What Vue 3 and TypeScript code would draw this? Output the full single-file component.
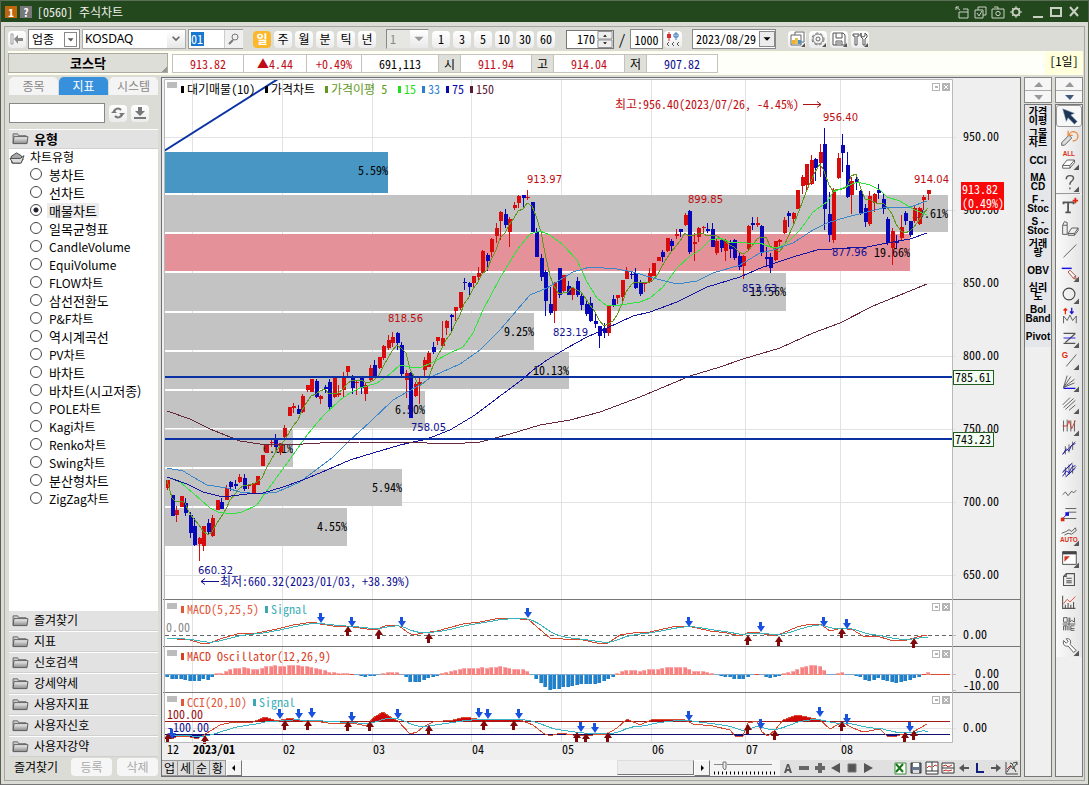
<script setup lang="ts">
import { ref } from 'vue'

type Point = [number, number]

/* ---------- toolbar ---------- */
const periods = ['일', '주', '월', '분', '틱', '년']
const minutes = ['1', '3', '5', '10', '30', '60']
const code = ref('01')
const count = ref('170')
const total = ref('1000')
const keyword = ref('')

const quotes = [
  { text: '913.82', tone: 'up', size: 'w72' },
  { text: '▲4.44', tone: 'up', size: 'w64' },
  { text: '+0.49%', tone: 'up', size: 'w56' },
  { text: '691,113', tone: '', size: 'w78' },
  { text: '시', tone: 'cap', size: 'w22' },
  { text: '911.94', tone: 'up', size: 'w72' },
  { text: '고', tone: 'cap', size: 'w22' },
  { text: '914.04', tone: 'up', size: 'w72' },
  { text: '저', tone: 'cap', size: 'w22' },
  { text: '907.82', tone: 'down', size: 'w72' },
]

/* ---------- sidebar ---------- */
const chartTypes = [
  '봉차트', '선차트', '매물차트', '일목균형표', 'CandleVolume', 'EquiVolume', 'FLOW차트',
  '삼선전환도', 'P&F차트', '역시계곡선', 'PV차트', '바차트', '바차트(시고저종)', 'POLE차트',
  'Kagi차트', 'Renko차트', 'Swing차트', '분산형차트', 'ZigZag차트',
]
const isLatin = (name: string) => /[A-Za-z]/.test(name)
const chosen = ref('매물차트')
const groups = ['즐겨찾기', '지표', '신호검색', '강세약세', '사용자지표', '사용자신호', '사용자강약']

/* ---------- price chart ---------- */
const barX = (i: number) => Math.round(167 + i * 4.5)

// Each row: direction, high, body top, body bottom, low, in thirds of a unit below the base.
const blocks: { base: number; rows: string }[] = [
  {
    base: 360,
    rows: `R360,360,384,390 B405,405,467,467 R438,450,465,486 R408,408,440,440 B415,430,460,468
    B455,465,518,535 B475,498,555,557 R530,533,551,602 R498,498,558,572 B478,489,517,522
    R466,474,528,530 R420,420,449,449 B415,426,448,448 R375,384,421,421 B362,366,381,393
    B360,373,378,388 R343,350,366,368 B343,354,386,392 R372,374,379,388 R370,370,399,402
    R348,348,375,375 R285,285,318,318 R252,255,280,280 R240,245,250,262 B222,235,260,262
    R248,250,275,286 R195,203,231,236 R140,142,168,168 R128,138,143,158 B134,148,162,162
    R102,107,156,158 R75,75,90,95 R57,57,95,95 B57,63,110,115 R104,108,116,131
    B75,80,86,100 B57,66,141,150 R52,55,112,115 R75,98,104,110 R35,50,90,110
    R18,18,36,48 B45,55,84,102 R62,65,70,105 B55,55,85,102 R70,75,102,122
    R15,24,60,65 B0,15,50,55 R-10,-8,24,28 R-45,-42,-6,0 R-75,-60,-36,-30
    R-85,-70,-52,-40 B-84,-80,-50,-30 B-55,-45,42,48 R30,38,60,115 B36,38,173,175
    R66,72,107,110 R55,66,72,132`,
  },
  {
    base: 160,
    rows: `R590,600,630,648 R574,580,622,622 B546,560,577,582 R530,532,543,555 R484,534,558,562
    R480,484,504,526 B462,464,470,512 R440,442,454,482 R396,396,444,450 B355,367,370,390
    B366,370,382,404 R348,348,370,382 R320,339,352,365 R270,272,338,338 B280,284,303,332
    R235,238,276,292 R190,204,228,248 R152,156,184,240 B146,162,195,205 R172,176,216,260
    R125,134,144,150 R106,108,130,144 B104,105,113,140 R90,110,113,120 B125,125,216,216
    B203,217,290,290 B282,294,350,362 B330,336,423,467 B382,432,460,465 R366,370,453,488
    B324,324,404,414 R345,345,393,395 B362,378,404,405 R380,384,405,420 B350,363,404,410
    B400,407,435,450 B420,432,462,468 B412,430,482,486 B462,484,491,503 B498,498,527,563
    B490,504,519,533 R438,438,520,528 B405,416,437,442 R405,405,415,432 R360,360,410,430
    R322,332,356,356 B335,341,346,358 B325,338,384,388 B360,369,401,407 R365,366,373,396
    R325,340,366,368 R308,310,347,348 R290,291,302,304 B270,276,291,305 R234,234,274,276
    B238,242,257,272 R208,222,229,236 B206,206,215,232 R158,164,195,198 B150,153,276,282
    R220,246,251,304`,
  },
  {
    base: 80,
    rows: `R440,445,470,485 R438,441,444,460 B430,448,453,460 B430,447,500,502 R475,483,520,525
    B480,480,503,516 R476,480,514,542 B480,490,508,534 B478,480,535,540 B517,528,560,570
    R525,529,558,596 R436,438,506,510 B412,430,436,450 R412,430,434,442 B435,437,520,528
    B500,530,536,560 B520,530,565,578 R482,484,540,543 R478,480,485,502 R410,420,458,462
    B393,398,409,440 R395,398,416,432 R330,330,386,388 R286,290,318,342 R252,253,314,330
    R226,240,312,314 B233,238,263,302 R192,216,250,290 B145,192,388,450 B335,402,464,486
    R325,329,480,488 R220,235,293,298 B162,195,218,275 B216,256,350,355 R290,303,345,402
    B285,298,310,330 B330,334,402,405 B372,384,425,440 R334,348,432,438 R340,342,370,395
    B312,330,340,356 B340,356,386,402 B410,418,489,495 R445,452,504,555 B465,483,490,505
    R405,440,475,480 B393,398,422,435 B422,423,466,470 R378,384,422,430 R382,384,432,434
    R345,350,360,390 R330,331,342,360`,
  },
]

const candles = blocks
  .flatMap(({ base, rows }) =>
    rows.trim().split(/\s+/).map((row) => {
      const [high, top, bottom, low] = row.slice(1).split(',').map((v) => base + Math.round(Number(v) / 3))
      return { up: row[0] === 'R', high, top, bottom, low }
    }),
  )
  .map((c, i) => ({ ...c, x: barX(i) }))

const toLine = (points: Point[]) => points.map((p) => p.join(',')).join(' ')

const closes = candles.map((c) => (c.up ? c.top : c.bottom))
const fiveDay: Point[] = closes.map((_, i) => {
  const span = closes.slice(Math.max(0, i - 4), i + 1)
  return [barX(i), Math.round(span.reduce((a, b) => a + b, 0) / span.length)]
})

const averages = [
  { color: '#5f981c', points: toLine(fiveDay) },
  {
    color: '#2fe43a',
    points: `167,477 180,482 193,493 210,508 218,512 232,514 242,512 257,505 263,496 277,477 293,455 307,435
    323,416 340,400 350,393 360,388 377,383 390,374 400,365 410,367 420,368 433,362 450,353 463,347 473,333
    483,310 500,278 517,250 530,234 540,231 550,235 563,245 577,260 587,282 597,298 607,306 620,305 640,302
    650,298 663,287 677,268 690,256 700,250 710,240 720,238 730,242 747,243 760,243 770,247 777,248 787,243
    800,230 813,212 827,202 833,192 843,188 857,182 870,185 880,190 887,197 900,201 913,209 927,215`,
  },
  {
    color: '#3a86c8',
    points: `167,468 183,471 193,477 207,485 227,488 240,492 260,494 277,492 300,482 320,467 333,457 350,440
    370,422 393,400 407,392 420,385 433,376 460,364 480,350 500,330 517,310 530,295 547,288 560,280 573,272
    590,267 617,269 633,272 653,278 677,284 697,281 713,273 740,265 760,253 773,250 793,243 813,230 827,223
    847,217 867,212 887,207 910,207 927,201`,
  },
  {
    color: '#1414a0',
    points: `167,477 187,484 203,492 223,497 247,494 263,493 283,487 303,480 327,470 350,460 373,453 400,445
    427,439 450,430 475,415 500,396 523,379 533,370 547,360 567,348 587,337 607,328 633,316 650,312 677,302
    707,287 740,277 763,267 793,257 817,250 847,248 867,247 887,243 910,239 927,233`,
  },
  {
    color: '#66283f',
    points: `167,411 190,419 210,429 240,441 260,444 287,445 320,443 360,442 400,442 427,443 450,444 480,442
    510,434 540,425 570,420 600,412 640,397 690,376 720,367 743,359 780,348 813,333 840,323 873,306 900,295
    927,284`,
  },
]

const profile = [
  { y: 152, h: 41, end: 388, label: '5.59%', tone: 'blue' },
  { y: 195, h: 37, end: 948, label: '19.61%', tone: 'gray' },
  { y: 234, h: 37, end: 910, label: '19.66%', tone: 'pink' },
  { y: 273, h: 38, end: 786, label: '15.56%', tone: 'gray' },
  { y: 313, h: 37, end: 534, label: '9.25%', tone: 'gray' },
  { y: 352, h: 37, end: 569, label: '10.13%', tone: 'gray' },
  { y: 391, h: 37, end: 425, label: '6.50%', tone: 'gray' },
  { y: 430, h: 37, end: 293, label: '6.01%', tone: 'gray' },
  { y: 469, h: 37, end: 402, label: '5.94%', tone: 'gray' },
  { y: 508, h: 38, end: 347, label: '4.55%', tone: 'gray' },
]

const priceTicks = [950, 900, 850, 800, 750, 700, 650].map((v, i) => ({ label: `${v}.00`, y: 137 + i * 73 }))
const months = [
  { x: 192, label: '2023/01' }, { x: 282, label: '02' }, { x: 372, label: '03' }, { x: 471, label: '04' },
  { x: 561, label: '05' }, { x: 651, label: '06' }, { x: 745, label: '07' }, { x: 840, label: '08' },
]
const marks = [
  { x: 527, y: 183, text: '913.97', tone: 'red' },
  { x: 388, y: 322, text: '818.56', tone: 'red' },
  { x: 688, y: 203, text: '899.85', tone: 'red' },
  { x: 823, y: 121, text: '956.40', tone: 'red' },
  { x: 914, y: 183, text: '914.04', tone: 'red' },
  { x: 553, y: 336, text: '823.19', tone: 'navy' },
  { x: 742, y: 292, text: '853.63', tone: 'navy' },
  { x: 832, y: 256, text: '877.96', tone: 'navy' },
  { x: 411, y: 431, text: '758.05', tone: 'navy' },
  { x: 198, y: 574, text: '660.32', tone: 'navy' },
]
const legend = [
  { x: 181, text: '대기매물(10)', color: '#000000' },
  { x: 265, text: '가격차트', color: '#000000' },
  { x: 325, text: '가격이평 5', color: '#5f981c' },
  { x: 398, text: '15', color: '#1ee020' },
  { x: 422, text: '33', color: '#2a7fd0' },
  { x: 446, text: '75', color: '#0808a8' },
  { x: 470, text: '150', color: '#5c1c38' },
]

/* ---------- lower panels ---------- */
const parse = (s: string): Point[] => s.trim().split(/\s+/).map((p) => p.split(',').map(Number) as Point)

const macd = parse(`167,638 177,639 190,640 200,643 210,643 220,639 237,634 257,633 277,629 293,625 313,622
  320,624 333,626 353,627 367,629 378,629 387,625 398,625 407,632 413,635 423,633 437,631 463,624 480,622
  500,618 520,619 528,619 537,627 550,638 563,639 583,640 597,643 608,643 620,635 633,633 650,632 663,629
  677,626 688,626 710,631 727,633 740,636 750,632 760,633 773,636 783,633 797,627 810,624 820,624 830,631
  842,628 853,630 863,636 877,636 890,640 907,640 917,637 927,635`)
const cci = parse(`167,734 172,739 178,736 187,736 197,739 207,733 220,725 233,722 253,722 265,717 277,721
  290,718 303,721 315,721 328,723 340,723 357,724 367,726 373,718 383,712 392,718 398,721 410,734 417,732
  423,727 433,722 453,720 465,717 477,719 500,719 520,720 533,725 543,733 550,736 560,733 573,735 593,735
  607,734 617,728 627,719 640,725 653,719 683,719 693,724 713,726 730,730 735,736 743,736 748,723 757,721
  762,732 768,736 775,730 783,720 797,715 807,717 820,720 830,729 842,722 853,728 863,732 880,729 887,736
  897,736 907,733 913,732 927,724`)

const sampleAt = (points: Point[], x: number) => {
  const k = points.findIndex((p) => p[0] >= x)
  if (k <= 0) return points[0][1]
  const [x0, y0] = points[k - 1]
  const [x1, y1] = points[k]
  return y0 + ((y1 - y0) * (x - x0)) / (x1 - x0)
}
const smooth = (points: Point[], weight: number): Point[] => {
  let last = points[0][1]
  return candles.map(({ x }) => {
    last += (sampleAt(points, x) - last) * weight
    return [x, Math.round(last * 10) / 10]
  })
}
const macdSignal = toLine(smooth(macd, 0.34))
const cciSignal = toLine(smooth(cci, 0.18))

const oscillator = `-10 -15 -16 -14 -18 -22 -22 -20 -15 -18 -10 2 4 10 15 18 19 20 19 16 15 18 24 25 26 24 25 27 27
  26 25 25 20 17 15 12 5 6 2 4 3 -1 -3 -6 -9 -7 -6 -3 3 6 7 6 -4 -10 -25 -25 -25 -18 -13 -10 -5 2 7 10 12 16 18 19
  19 19 21 19 21 22 24 22 19 16 16 14 10 -2 -15 -27 -40 -48 -46 -46 -40 -39 -36 -33 -31 -31 -31 -30 -26 -22 -14
  -8 3 9 12 13 11 9 11 14 16 16 19 22 22 22 21 21 15 10 9 9 6 4 -3 -6 -8 -10 -14 -16 -15 -8 -3 0 -3 -8 -12 -10
  -6 2 6 10 15 20 24 28 27 24 13 -3 -4 3 6 -2 -4 -5 -10 -18 -20 -17 -13 -17 -22 -25 -27 -25 -20 -18 -13 -8 0 6`
  .split(/\s+/)
  .map((v, i) => ({ x: barX(i) - 2, size: Math.round(Math.abs(Number(v)) / 3), up: Number(v) > 0 }))

const fallArrows = parse(`320,618 351,622 401,622 527,613 688,622 760,627 823,622 846,624 171,734 279,714 298,714
  311,713 351,717 397,714 478,713 487,714 518,714 580,727 594,728 688,716 760,724 819,712 846,719 909,727`)
const riseArrows = parse(`347,631 378,634 428,638 747,640 778,641 841,633 913,643 167,738 204,740 284,725 307,725
  347,726 369,726 428,730 483,725 513,725 576,737 585,738 607,737 747,729 774,735 841,726 904,737 913,735`)

const panels = [
  { y: 600, color: '#e2573a', name: 'MACD(5,25,5)', second: 265 },
  { y: 647, color: '#d8401f', name: 'MACD Oscillator(12,26,9)', second: 0 },
  { y: 693, color: '#e2573a', name: 'CCI(20,10)', second: 253 },
]

/* ---------- right columns ---------- */
const quickItems = [
  ['가격', '이평'], ['그물', '차트'], ['CCI'], ['MA', 'CD'], ['F -', 'Stoc'], ['S -', 'Stoc'],
  ['거래', '량'], ['OBV'], ['심리', '도'], ['Bol', 'Band'], ['Pivot'],
]

const corner = '<path d="M22 16v6h-6z" fill="#555"/>'
const drawTools: { name: string; art: string }[] = [
  { name: '선택', art: '<path d="M4 3l13 5-4 2 7 7-3 3-7-7-2 4z" fill="#1d3557" stroke="#8fa7c4" stroke-width=".6"/>' },
  { name: '되돌리기', art: '<path d="M3 16l8-8 3 3-8 8H3z" fill="#ddd" stroke="#555"/><path d="M11 8a5 5 0 1 1 4 6M10 3v5h5" fill="none" stroke="#e8863c" stroke-width="1.4"/>' },
  { name: '전체삭제', art: '<text x="4" y="7" font-size="7" font-weight="bold" fill="#d8301c">ALL</text><path d="M4 17l5-6h8l-5 6zM4 17v3h8v-3M12 20l5-6v-3" fill="#fff" stroke="#555"/>' + corner },
  { name: '도움말', art: '<path d="M8 8q0-4 4-4t4 3q0 2-3 4-1 1-1 3M12 17v2" fill="none" stroke="#555" stroke-width="1.6"/>' + corner },
  { name: '문자', art: '<path d="M5 9V7h11v2M10 7v11M7 18h6" fill="none" stroke="#555" stroke-width="2"/><path d="M18 2v6M15 5h6" stroke="#e02810" stroke-width="2"/>' },
  { name: '개체삭제', art: '<path d="M4 8h5v10H4zM4 8l2-4 3 1v3M10 17l4-6h7l-4 6zM10 17v2h7v-2M17 19l4-5v-3" fill="#eee" stroke="#555"/>' },
  { name: '추세선', art: '<path d="M5 19L19 5" stroke="#555"/>' },
  { name: '수평선', art: '<path d="M3 7h11" stroke="#1810e0" stroke-width="1.6"/><path d="M12 9l6 6-2 3-6-7zM16 18l3 1-1-4" fill="#fff" stroke="#a04030"/>' + corner },
  { name: '원', art: '<circle cx="11" cy="11" r="6.500" fill="none" stroke="#444" stroke-width="1.2"/>' + corner },
  { name: '파동', art: '<path d="M5 19v-8l4 5 3-6 3 6 4-5v8" fill="none" stroke="#555"/><path d="M7 9V3M5 5l2-2 2 2" stroke="#e02810" fill="none" stroke-width="1.4"/><path d="M14 2v7M12 6l2 2 2-2" stroke="#1810e0" fill="none" stroke-width="1.4"/>' },
  { name: '구간', art: '<path d="M5 6h13M18 6L7 16M5 17h13" stroke="#555" fill="none" stroke-width="1.3"/><path d="M5 11h13" stroke="#1810e0"/>' + corner },
  { name: '각도', art: '<text x="3" y="9" font-size="9" font-weight="bold" fill="#e02810">G</text><path d="M8 18L19 5" stroke="#555"/>' + corner },
  { name: '부채선', art: '<path d="M5 17L9 4M5 17l8-12M5 17l12-9M5 17l12-5" stroke="#555" fill="none"/><path d="M5 18h13" stroke="#1810e0" stroke-width="1.4"/>' + corner },
  { name: '평행선', art: '<path d="M4 12l8-8M5 15L16 5M7 17L18 7M11 18l7-6" stroke="#555"/>' + corner },
  { name: '시간대', art: '<path d="M5 5v12M9 4v13M13 5v12M17 5v12" stroke="#555"/><path d="M4 11h5l2-6 3 9 4-9" stroke="#c83a28" fill="none"/>' + corner },
  { name: '채널', art: '<path d="M4 18L18 4M7 9v9M11 7v9M15 4v9" stroke="#555"/><path d="M4 18l4-6 3 2 3-6 4-2" stroke="#1810c0" fill="none"/>' },
  { name: '이중채널', art: '<path d="M4 14L15 3M7 19L19 7M7 8v9M11 5v11M15 5v10" stroke="#555"/><path d="M4 18l4-6 3 2 3-6 4-2M4 13L14 4M8 18L18 9" stroke="#1810c0" fill="none"/>' },
  { name: '지그재그', art: '<path d="M4 14l3-3 3 4 4-5 2 2 3-3" stroke="#555" fill="none"/>' },
  { name: '목표가', art: '<path d="M7 5h12M10 9h9M5 16h14" stroke="#555"/><path d="M3 17l5-5" stroke="#1810e0"/><path d="M2 15h4v4H2z" fill="#e02810"/><path d="M7 9h4v4H7z" fill="#1810e0"/>' },
  { name: '자동추세', art: '<path d="M3 8l5-2 3-2 3 2 4-4 1 3-5 4-4-1-4 2" stroke="#555" fill="none"/><text x="1" y="18" font-size="7" font-weight="bold" fill="#d8301c">AUTO</text>' + corner },
  { name: '화면', art: '<path d="M4 4h15v14H4z" fill="#fff" stroke="#444"/><path d="M4 5.500h15" stroke="#444" stroke-width="3"/><path d="M6 9h6l-6 6z" fill="#d8301c"/>' + corner },
  { name: '문서', art: '<path d="M8 4h9v13H5V7zM8 4v3H5M8 9h6M8 12h6M8 14h6" fill="none" stroke="#555" stroke-width="1.200"/>' },
  { name: '차트', art: '<path d="M4 4v14h14M7 18v-4M10 18v-6M13 18v-4M16 18v-7" stroke="#555" stroke-width="1.200" fill="none"/><path d="M5 13l4-5 3 3 6-6" stroke="#e04828" fill="none"/>' },
  { name: '주기', art: '<path d="M5 4h4v5H5zM12 4v5l2-2 3 2V4M11 4v14M4 11h14M5 18v-5h4v5M7 13v5M13 13h4M13 16h4M13 18h4M13 13v5" stroke="#555" fill="none"/>' },
  { name: '설정', art: '<path d="M5 5l3 3 2-2-2-3c4-1 6 3 4 6l7 7-3 2-6-7c-4 1-6-2-5-6z" fill="#fff" stroke="#555"/>' + corner },
]

/* ---------- bottom bar ---------- */
const viewKeys = ['업', '세', '순', '황']
const playTools: { name: string; art: string }[] = [
  { name: '글자', art: '<path d="M4 13l3-9h2l3 9h-2l-1-2H7l-1 2zM8 6l-1 3h2z" fill="#555"/>' },
  { name: '축소', art: '<path d="M3 6h10v4H3z" fill="#666"/>' },
  { name: '확대', art: '<path d="M6 3h4v3h3v4h-3v3H6v-3H3V6h3z" fill="#666"/>' },
  { name: '뒤로', art: '<path d="M12 3v10L3 8z" fill="#555"/>' },
  { name: '정지', art: '<path d="M4 4h8v8H4z" fill="#555" stroke="#777"/>' },
  { name: '앞으로', art: '<path d="M4 3v10l9-5z" fill="#555"/>' },
]
const fileTools: { name: string; art: string }[] = [
  { name: '엑셀', art: '<path d="M3 3h11v11H3z" fill="#fff" stroke="#3c8c3c"/><path d="M4 4l7 8M11 4l-7 8" stroke="#187818" stroke-width="2"/>' },
  { name: '저장', art: '<path d="M3 3h10v10H3z" fill="#69758c" stroke="#333"/><path d="M5 3h6v4H5z" fill="#fff"/><path d="M5 10h6v3H5z" fill="#ddd"/>' },
  { name: '차트틀', art: '<path d="M2 2h12v12H2zM8 2v9M2 11h12" fill="#fff" stroke="#333"/><path d="M3 8l2-2 2 1M9 7l2-2 2 1" stroke="#c03020" fill="none"/>' },
  { name: '지표틀', art: '<path d="M2 3h12v10H2zM2 8h12" fill="#fff" stroke="#333"/><path d="M3 6l3-1 2 2 4-2M3 11l3-1 2 1 4-1" stroke="#c03020" fill="none"/>' },
  { name: '왼쪽', art: '<path d="M3 8l5-4v3h5v2H8v3z" fill="#555"/>' },
  { name: '로그', art: '<path d="M5 3v9h7" stroke="#10207c" stroke-width="2" fill="none"/>' },
  { name: '오른쪽', art: '<path d="M13 8L8 4v3H3v2h5v3z" fill="#555"/>' },
  { name: '도구', art: '<path d="M2 2v12h12M3 12l4-6 2 3 4-6M6 3q3 0 3 3l3 6M9 3l4-1v3" stroke="#444" fill="none"/><path d="M3 9l4-4" stroke="#c03020"/>' },
]

/* ---------- title bar and toolbar icons ---------- */
const windowTools: { name: string; art: string; wide?: boolean }[] = [
  { name: '분리', art: '<path d="M2 3l4 3M2 6V3h3M9 5h5v9H5V8h5M10 8h4" />' },
  { name: '복사', art: '<path d="M3 6h8v8H3zM6 6V3h8v8h-3M5 9l2 3 3-5" />' },
  { name: '캡처', art: '<path d="M2 5h12v9H2zM4 3h4v2" /><circle cx="8" cy="9.500" r="2.200"/>' },
  { name: '환경', art: '<circle cx="8" cy="8" r="3.500" stroke-width="2"/><path d="M8 2v2M8 12v2M2 8h2M12 8h2M4 4l1 1M11 11l1 1M12 4l-1 1M4 12l1-1"/>' },
  { name: '최소화', art: '<path d="M3 13h10" stroke-width="2"/>', wide: true },
  { name: '최대화', art: '<path d="M3 4h10v8H3z" stroke-width="2"/>' },
  { name: '닫기', art: '<path d="M4 3l8 9M12 3l-8 9" stroke-width="2"/>' },
]
const chartTools: { name: string; art: string }[] = [
  { name: '차트 설정', art: '<path d="M6 4V1h9v10h-3M2 4h10v10H2z" fill="#fff" stroke="#666"/><path d="M3 13V9h3v4" fill="#f0b030"/><path d="M6 13V7h3v6" fill="#e8c050"/><path d="M9 13v-4h3v4" fill="#4890d0"/><path d="M16 12v4h-4z" fill="#555"/>' },
  { name: '환경 설정', art: '<circle cx="8" cy="8" r="6" fill="none" stroke="#777" stroke-dasharray="3 2"/><circle cx="8" cy="8" r="5" fill="none" stroke="#777"/><circle cx="8" cy="8" r="2" fill="none" stroke="#666"/><path d="M16 12v4h-4z" fill="#555"/>' },
  { name: '저장', art: '<path d="M2 2h10l2 2v10H2zM5 2v5h6V2M5 14v-4h6v4M6 12h4" fill="#fff" stroke="#555"/><path d="M16 12v4h-4z" fill="#555"/>' },
  { name: '도구', art: '<path d="M1 3h6v2H5v9H3V5H1zM9 2v3l2 1 2-1V2l2 2v2l-2 2v6h-2V8L9 6z" fill="#fff" stroke="#555"/><path d="M16 12v4h-4z" fill="#555"/>' },
]
</script>

<template>
  <div class="window">
    <header class="titlebar">
      <span class="badge orange">1</span>
      <span class="badge grey">?</span>
      <h1>[0560] 주식차트</h1>
      <button
        v-for="t in windowTools" :key="t.name" type="button" :aria-label="t.name"
        :class="['wtool', { apart: t.wide }]"
      >
        <svg viewBox="0 0 16 16" v-html="t.art" />
      </button>
    </header>

    <div class="frame">
      <div class="toolbar">
        <button class="chip" type="button" aria-label="처음으로">
          <svg viewBox="0 0 16 16"><path d="M2 3h2v10H2z" fill="#fff" stroke="#999" /><path d="M5 8l4-4v3h5v3H9v3z" fill="#888" /></svg>
        </button>
        <span class="combo kind">
          <select aria-label="구분"><option>업종</option></select>
          <svg class="drop boxed" viewBox="0 0 13 15"><path d="M3 6h7l-3 4z" fill="#555" /></svg>
        </span>
        <span class="combo item">
          <select aria-label="지수"><option>KOSDAQ</option></select>
          <svg class="drop soft" viewBox="0 0 16 16"><path d="M5 6l3 3 3-3" fill="none" stroke="#666" stroke-width="1.5" /></svg>
        </span>
        <span class="finder">
          <input v-model="code" class="code" aria-label="종목코드">
          <button type="button" aria-label="검색">
            <svg viewBox="0 0 18 18"><circle cx="10" cy="7" r="3" fill="none" stroke="#777" /><path d="M8 10l-4 4" stroke="#777" stroke-width="2" /></svg>
          </button>
        </span>
        <span class="chips first">
          <button v-for="p in periods" :key="p" type="button" :class="['chip', { on: p === '일' }]">{{ p }}</button>
        </span>
        <span class="combo step">
          <select aria-label="간격" disabled><option>1</option></select>
          <svg class="drop soft" viewBox="0 0 16 16"><path d="M4 6h8l-4 4z" fill="#999" /></svg>
        </span>
        <span class="chips">
          <button v-for="m in minutes" :key="m" type="button" class="chip">{{ m }}</button>
        </span>
        <span class="spin">
          <input v-model="count" aria-label="표시 개수">
          <svg viewBox="0 0 16 18"><path d="M.5.500h15v8H.5zM.5 9.500h15v8H.5z" fill="#eee" stroke="#888" /><path d="M6 6l2-2 2 2zM6 12l2 2 2-2z" /></svg>
        </span>
        <span class="slash">/</span>
        <input v-model="total" class="total" aria-label="전체 개수">
        <button class="chip" type="button" aria-label="봉 간격">
          <svg viewBox="0 0 16 16"><path d="M4 1v9" stroke="#d03030" /><path d="M2 3h4v4H2z" fill="#d03030" /><path d="M11 1v8M9 3h4v3H9z" fill="#fff" stroke="#3878c0" /><path d="M4 11l-2 2 2 2M9 11l-2 2 2 2M14 11l-2 2 2 2" fill="none" stroke="#555" /></svg>
        </button>
        <span class="combo date">
          <select aria-label="기준일"><option>2023/08/29</option></select>
          <svg class="drop raised" viewBox="0 0 16 16"><path d="M4 6h8l-4 4z" /></svg>
        </span>
        <span class="chips last">
          <button v-for="t in chartTools" :key="t.name" type="button" class="chip" :aria-label="t.name">
            <svg viewBox="0 0 16 16" v-html="t.art" />
          </button>
        </span>
      </div>

      <div class="quotebar">
        <strong class="name">코스닥</strong>
        <div class="quotes">
          <span v-for="(q, i) in quotes" :key="i" :class="['cell', q.tone, q.size]">{{ q.text }}</span>
        </div>
        <span class="day">[1일]</span>
      </div>

      <main class="main">
        <aside class="side">
          <nav class="tabs">
            <button type="button">종목</button>
            <button type="button" class="on">지표</button>
            <button type="button">시스템</button>
          </nav>
          <div class="lookup">
            <input v-model="keyword" aria-label="지표 검색">
            <button class="chip" type="button" aria-label="새로고침">
              <svg viewBox="0 0 16 16"><path d="M4 8a4 4 0 0 1 7-3M12 8a4 4 0 0 1-7 3" fill="none" stroke="#777" stroke-width="2" /><path d="M9 8h6l-3 3zM1 8h6L4 5z" fill="#777" /></svg>
            </button>
            <button class="chip" type="button" aria-label="내려받기">
              <svg viewBox="0 0 16 16"><path d="M6 2h4v4h3l-5 5-5-5h3zM2 12h12v2H2z" fill="#777" /></svg>
            </button>
          </div>
          <h2 class="group head">
            <svg class="folder" viewBox="0 0 18 14"><use href="#folder" /></svg>유형
          </h2>
          <div class="tree">
            <div class="root">
              <svg class="folder" viewBox="0 0 18 14"><path d="M2 6l6-4 5 3 2 4-3 4H3z" fill="#aaa" stroke="#444" /><path d="M1 8h11l4-3-3 8H4z" fill="#ddd" stroke="#444" /></svg>차트유형
            </div>
            <label v-for="t in chartTypes" :key="t" :class="{ picked: t === chosen, latin: isLatin(t) }">
              <input v-model="chosen" type="radio" name="chart-type" :value="t"><span>{{ t }}</span>
            </label>
          </div>
          <button v-for="g in groups" :key="g" type="button" class="group">
            <svg class="folder" viewBox="0 0 18 14"><use href="#folder" /></svg>{{ g }}
          </button>
          <div class="favor">
            <span>즐겨찾기</span>
            <button type="button" disabled>등록</button>
            <button type="button" disabled>삭제</button>
          </div>
        </aside>

        <section class="chart">
          <svg class="plot" viewBox="162 78 858 682" preserveAspectRatio="xMinYMin meet">
            <defs>
              <linearGradient id="metal" x1="0" y1="0" x2="0" y2="1">
                <stop offset="0" stop-color="#f4f4f4" /><stop offset="1" stop-color="#8a8a8a" />
              </linearGradient>
              <g id="folder">
                <path d="M1 12V2h5l1 2h8v2" fill="#ccc" stroke="#666" />
                <path d="M1 12.500L2 5h15l-1 7.500z" fill="url(#metal)" stroke="#555" />
              </g>
              <clipPath id="over"><path d="M165 693h787v28H165z" /></clipPath>
              <clipPath id="under"><path d="M165 735h787v8H165z" /></clipPath>
              <clipPath id="area"><path d="M165 80h787v664H165z" /></clipPath>
            </defs>

            <rect x="162" y="78" width="858" height="682" fill="#efefef" />
            <rect x="165" y="80" width="787" height="663" fill="#fff" />
            <g class="grid">
              <line v-for="m in months" :key="m.x" :x1="m.x" :x2="m.x" y1="80" y2="742" />
              <line v-for="t in priceTicks" :key="t.y" x1="165" x2="956" :y1="t.y" :y2="t.y" />
              <line x1="165" x2="956" y1="728" y2="728" />
            </g>

            <rect v-for="p in profile" :key="p.y" x="165" :y="p.y" :width="p.end - 165" :height="p.h" :class="p.tone" />
            <text v-for="p in profile" :key="p.label" :x="p.end" :y="p.y + 23" text-anchor="end">{{ p.label }}</text>

            <g class="crisp">
              <g v-for="c in candles" :key="c.x" :fill="c.up ? '#d80c0c' : '#0808b8'">
                <rect :x="c.x" :y="c.high" width="1" :height="c.low - c.high" />
                <rect :x="c.x - 1" :y="c.top" width="4" :height="Math.max(1, c.bottom - c.top)" />
              </g>
            </g>
            <polyline v-for="a in averages" :key="a.color" class="trace" :points="a.points" :stroke="a.color" />

            <g class="ruler" clip-path="url(#area)">
              <line x1="165" x2="952" y1="377" y2="377" />
              <line x1="165" x2="952" y1="439" y2="439" />
              <line x1="164" y1="151" x2="278" y2="79" />
            </g>

            <text v-for="m in marks" :key="m.text" class="small" :class="m.tone" :x="m.x" :y="m.y">{{ m.text }}</text>
            <text class="red" x="615" y="109">최고:956.40(2023/07/26, -4.45%)</text>
            <path d="M803 104.500h18M817 101.500l4 3-4 3" fill="none" stroke="#b01010" />
            <text class="navy" x="220" y="586">최저:660.32(2023/01/03, +38.39%)</text>
            <path d="M219 581.500h-18M205 578.500l-4 3 4 3" fill="none" stroke="#101090" />

            <rect x="167" y="82" width="10" height="6" fill="#bcbcbc" />
            <g v-for="l in legend" :key="l.x" :fill="l.color">
              <rect :x="l.x" y="86" width="3" height="7" />
              <text :x="l.x + 6" y="94" :style="{ fill: l.color }">{{ l.text }}</text>
            </g>

            <text v-for="t in priceTicks" :key="t.label" x="963" :y="t.y + 4">{{ t.label }}</text>
            <rect x="961" y="182" width="43" height="28" fill="#f80808" />
            <text x="962" y="194" class="white">913.82</text>
            <text x="962" y="208" class="white">(0.49%)</text>
            <rect class="tag" x="953.500" y="370.500" width="40" height="14" />
            <text x="955" y="382">785.61</text>
            <rect class="tag" x="953.500" y="432.500" width="40" height="14" />
            <text x="955" y="444">743.23</text>

            <g v-for="p in panels" :key="p.y">
              <rect x="163" :y="p.y - 1" width="857" height="1" fill="#777" />
              <rect x="167" :y="p.y + 3" width="10" height="6" fill="#bcbcbc" />
              <rect x="181" :y="p.y + 6" width="3" height="7" :fill="p.color" />
              <text x="187" :y="p.y + 14" :style="{ fill: p.color }">{{ p.name }}</text>
              <template v-if="p.second">
                <rect :x="p.second" :y="p.y + 6" width="3" height="7" fill="#3aa8b4" />
                <text :x="p.second + 6" :y="p.y + 14" class="teal">Signal</text>
              </template>
            </g>
            <g v-for="y in [83, 603, 650, 696]" :key="y" fill="none" stroke="#b4b4b4">
              <rect x="932.500" :y="y + 0.5" width="7" height="7" /><rect x="935" :y="y + 3" width="3" height="2" fill="#b4b4b4" stroke="none" />
              <rect x="942.500" :y="y + 0.5" width="7" height="7" fill="#b4b4b4" /><path :d="`M944 ${y + 2}l4 4M948 ${y + 2}l-4 4`" stroke="#fff" />
            </g>

            <text x="166" y="632" class="dim">0.00</text>
            <line x1="165" x2="952" y1="635.500" y2="635.500" stroke="#666" stroke-dasharray="4 3" />
            <g clip-path="url(#area)">
              <polyline class="trace" :points="toLine(macd)" stroke="#d84a30" />
              <polyline class="trace" :points="macdSignal" stroke="#3ab4b8" />
            </g>

            <g class="crisp">
              <rect x="165" y="674" width="785" height="1" fill="#e04830" />
              <rect
                v-for="o in oscillator" :key="o.x" :x="o.x" :y="o.up ? 674 - o.size : 674" width="4" :height="o.size"
                :fill="o.up ? '#f88080' : '#2080c8'" stroke="#fff" stroke-opacity=".35" stroke-width="1"
              />
            </g>

            <rect x="165" y="721" width="785" height="1" fill="#a01818" />
            <rect x="165" y="734" width="785" height="1" fill="#101070" />
            <polygon :points="`167,721 ${toLine(cci)} 927,721`" fill="#d00808" clip-path="url(#over)" />
            <polygon :points="`167,735 ${toLine(cci)} 927,735`" fill="#101088" clip-path="url(#under)" />
            <polyline class="trace" :points="toLine(cci)" stroke="#d84a30" />
            <polyline class="trace" :points="cciSignal" stroke="#3ab4c8" />
            <text x="167" y="719" class="maroon">100.00</text>
            <text x="167" y="732" class="navy">-100.00</text>

            <g clip-path="url(#area)">
              <path v-for="([x, y], i) in fallArrows" :key="i" :d="`M${x - 1} ${y - 5}h3v4h3l-4 6-4-6h2z`" fill="#1850e0" />
              <path v-for="([x, y], i) in riseArrows" :key="i" :d="`M${x - 1} ${y + 5}h3v-4h3l-4-6-4 6h2z`" fill="#800808" />
            </g>

            <path d="M164.500 742.500V79.500h788v663z" fill="none" stroke="#b8b8b8" />
            <text x="963" y="639">0.00</text>
            <text x="975" y="678">0.00</text>
            <text x="963" y="690">-10.00</text>
            <text x="963" y="732">0.00</text>
            <path d="M952 635.500h4M952 674.500h4M952 690.500h4" stroke="#bbb" />
            <text x="167" y="754">12</text>
            <text v-for="m in months" :key="m.label" :x="m.x + 1" y="754" :class="{ bold: m.label.length > 2 }">{{ m.label }}</text>
          </svg>

          <footer class="bottombar">
            <button v-for="k in viewKeys" :key="k" type="button" class="key">{{ k }}</button>
            <button type="button" class="nudge" aria-label="왼쪽으로"><svg viewBox="0 0 14 14"><path d="M8 4v6L5 7z" /></svg></button>
            <div class="track"><span class="thumb" /></div>
            <button type="button" class="nudge" aria-label="오른쪽으로"><svg viewBox="0 0 14 14"><path d="M6 4v6l3-3z" /></svg></button>
            <svg class="zoomer" viewBox="0 0 70 16">
              <path d="M4 4.500h9M17 4.500h45" stroke="#888" /><path d="M13 2h3v6l-1 2-2-2z" fill="#eee" stroke="#777" />
              <path d="M4 13h62" stroke="#000" stroke-width="3" stroke-dasharray="1 3" />
            </svg>
            <button v-for="t in playTools" :key="t.name" type="button" class="mini" :aria-label="t.name"><svg viewBox="0 0 16 16" v-html="t.art" /></button>
            <span class="space" />
            <button v-for="t in fileTools" :key="t.name" type="button" class="mini" :aria-label="t.name"><svg viewBox="0 0 16 16" v-html="t.art" /></button>
          </footer>
        </section>

        <aside class="rail">
          <div class="pager">
            <button type="button" aria-label="위로"><svg viewBox="0 0 26 11"><path d="M9 8h9l-4-5z" fill="#999" /></svg></button>
            <button type="button" aria-label="아래로"><svg viewBox="0 0 26 11"><path d="M9 4h9l-4 5z" fill="#999" /></svg></button>
          </div>
          <div class="well">
            <button v-for="q in quickItems" :key="q.join('')" type="button" class="quick">
              <span v-for="line in q" :key="line">{{ line }}</span>
            </button>
          </div>
        </aside>

        <aside class="rail">
          <div class="pager">
            <button type="button" aria-label="위로"><svg viewBox="0 0 26 11"><path d="M9 8h9l-4-5z" fill="#999" /></svg></button>
            <button type="button" aria-label="아래로"><svg viewBox="0 0 26 11"><path d="M9 4h9l-4 5z" fill="#41597a" /></svg></button>
          </div>
          <div class="well tools">
            <template v-for="(t, i) in drawTools" :key="t.name">
              <hr v-if="i === 4">
              <button type="button" :class="['draw', { on: i === 0 }]" :aria-label="t.name"><svg viewBox="0 0 22 22" v-html="t.art" /></button>
            </template>
          </div>
        </aside>
      </main>
    </div>
  </div>
</template>

<style>
body { margin: 0; }
</style>

<style scoped>
.window {
  --mono: "Noto Sans Mono CJK KR", "Noto Sans CJK KR", monospace;
  --ui: "Noto Sans CJK KR", "Liberation Sans", sans-serif;
  box-sizing: border-box;
  display: flex;
  flex-direction: column;
  min-height: 100vh;
  background: #dcdcd6;
  border-left: 1px solid #55604f;
  border-right: 1px solid #55604f;
  border-bottom: 1px solid #777;
  font: 12px/16px var(--mono);
  color: #000;
}
*, *::before, *::after { box-sizing: border-box; }
button, input, select { margin: 0; padding: 0; border: 0; font: inherit; color: inherit; background: none; border-radius: 0; outline: 0; }
select { appearance: none; opacity: 1; }
svg { display: block; }

.titlebar { display: flex; align-items: center; gap: 3px; height: 22px; padding: 0 7px 0 4px; background: #24481e; border-top: 1px solid #5a6e56; color: #fff; }
.titlebar h1 { flex: 1; margin: 0 0 0 2px; font-size: 12px; font-weight: 400; color: #f0f0ea; }
.badge { width: 12px; height: 12px; font-size: 11px; line-height: 12px; font-weight: 700; text-align: center; }
.orange { background: #c0660c; }
.grey { background: #777; }
.wtool { width: 16px; height: 16px; margin-right: -1px; }
.wtool.apart { margin-left: 4px; }
.wtool svg { width: 16px; height: 16px; fill: none; stroke: #c8d0c2; }

.frame { flex: 1; display: flex; flex-direction: column; margin: 4px 3px 3px; padding: 0 1px 3px 3px; border: 1px solid #a4a4a0; }

.toolbar { display: flex; align-items: center; height: 24px; }
.chip { width: 18px; height: 17px; border-radius: 4px; background: linear-gradient(#fff, #ececec); text-align: center; line-height: 16px; display: grid; place-items: center; }
.chip svg { width: 16px; height: 16px; }
.chip.on { background: #fbb82a; color: #fff; font-weight: 700; }
.chips { display: flex; gap: 3px; }
.chips.first { margin: 0 10px; }
.chips.last { margin-left: 12px; }
.combo { display: flex; align-items: center; height: 20px; background: #fff; border: 1px solid #888; }
.combo select { flex: 1; min-width: 0; height: 18px; padding-left: 3px; line-height: 18px; }
.combo.kind { width: 52px; margin-left: 2px; }
.combo.item { width: 104px; margin-left: 2px; border-color: #aaa; }
.combo.item select { padding-left: 2px; font-family: "Noto Sans", sans-serif; }
.combo.step { width: 43px; margin-right: 3px; border-color: #888 #ddd #ddd #888; background: #e6e6e2; color: #888; }
.combo.step select { color: #888; }
.combo.date { width: 84px; margin-left: 10px; }
.drop { width: 16px; height: 16px; }
.drop.boxed { width: 13px; height: 15px; margin-right: 2px; border: 1px solid #888; }
.drop.soft { width: 18px; height: 18px; background: linear-gradient(#fff, #e8e8e8); }
.drop.raised { background: #ececec; border: 1px solid #888; }
.finder { display: flex; align-items: center; width: 55px; height: 20px; margin-left: 2px; padding-left: 2px; background: #fff; border: 1px solid #999; border-right: 0; }
.code { width: 13px; height: 14px; margin-right: auto; background: #1878d0; color: #fff; }
.finder button { width: 19px; height: 18px; border-left: 1px solid #ccc; background: #f0f0f0; }
.finder svg { width: 18px; height: 18px; }
.spin { display: flex; width: 48px; height: 19px; margin-left: 11px; background: #fff; border: 1px solid #777; }
.spin input { flex: 1; min-width: 0; text-align: right; }
.spin svg { width: 16px; height: 17px; margin-left: 2px; }
.slash { width: 16px; text-align: center; font-size: 14px; }
.total { width: 33px; height: 20px; margin-right: 1px; text-align: center; background: #fff; border: 1px solid #888; }

.quotebar { display: flex; align-items: center; height: 24px; background: #fffffa; border: solid #ffffe8; border-width: 1px 0; }
.name { width: 160px; height: 20px; border: 1px solid #aaaa9e; background: linear-gradient(135deg, #deded9 97%, #999 97%); font: 700 13px/17px var(--ui); text-align: center; }
.quotes { display: flex; flex: 1; margin-left: 4px; }
.cell { height: 19px; margin-right: -1px; border: 1px solid #c4c4bc; background: #fff; line-height: 18px; text-align: center; }
.w72 { width: 72px; } .w64 { width: 64px; } .w56 { width: 56px; } .w78 { width: 78px; } .w22 { width: 23px; }
.up { color: #c00c18; }
.down { color: #10108c; }
.cap { background: #e0e0da; }
.day { width: 38px; height: 22px; background: #ffffdc; line-height: 18px; text-align: center; }

.main { flex: 1; display: grid; grid-template-columns: 149px minmax(0, 1fr) 28px 28px; gap: 3px; margin: 2px 0 0 1px; }

.side { display: flex; flex-direction: column; }
.tabs { display: flex; gap: 1px; height: 18px; }
.tabs button { flex: 1; border-radius: 5px 5px 0 0; background: #f4f4f4; color: #888; }
.tabs .on { background: #3790dc; color: #fff; }
.lookup { display: flex; align-items: center; gap: 4px; height: 32px; margin-top: 2px; }
.lookup input { width: 96px; height: 20px; background: #fff; border: 1px solid #888; }
.group { display: flex; align-items: center; gap: 5px; height: 21px; flex: none; padding: 0 0 1px 3px; background: #e2e2e2; border: solid; border-width: 1px 0; border-color: #fff transparent #d0d0d0; text-align: left; }
.folder { width: 17px; height: 13px; }
.head { margin: 0; height: 20px; font: 700 13px/18px var(--ui); }
.tree { flex: 1; background: #fff; }
.root { display: flex; align-items: center; gap: 4px; height: 16px; }
.tree label { display: flex; align-items: center; height: 18px; padding-left: 21px; font-family: var(--ui); font-size: 13px; }
.tree label.latin { font-size: 12px; }
.tree label span { padding: 0 2px; line-height: 15px; }
.tree .picked span { background: #ececec; }
.tree input { appearance: none; width: 12px; height: 12px; margin-right: 5px; border: 1px solid #444; border-radius: 50%; background: #fff; }
.tree input:checked { background: radial-gradient(circle, #223 2px, #fff 3px); }
.favor { display: flex; align-items: center; gap: 5px; height: 20px; padding-left: 5px; }
.favor button { width: 41px; height: 18px; border-radius: 4px; background: #f6f6f6; color: #aaa; }
.favor span { flex: 1; }

.chart { display: flex; flex-direction: column; min-width: 0; border: 1px solid #6e6e76; background: #efefef; }
.plot { flex: 1 1 0; width: 100%; min-height: 0; font: 12px var(--mono); }
.plot text { fill: #000; }
.plot .small { font: 10px "DejaVu Sans", sans-serif; }
.plot .red { fill: #c00c10; }
.plot .navy { fill: #101090; }
.plot .white { fill: #fff; }
.plot .teal { fill: #3ab0b8; }
.plot .dim { fill: #888; }
.plot .maroon { fill: #981010; }
.plot .bold { font-weight: 700; }
.grid line { stroke: #e2e2e2; shape-rendering: crispEdges; }
.crisp { shape-rendering: crispEdges; }
.trace { fill: none; shape-rendering: crispEdges; }
.ruler line { stroke: #0a32a4; stroke-width: 2; }
.blue { fill: #4896c4; }
.gray { fill: #c3c3c3; }
.pink { fill: #e5919a; }
.tag { fill: #f2fff2; stroke: #245c24; }

.bottombar { display: flex; align-items: center; height: 16px; background: #e0e0e0; }
.key { width: 16px; height: 16px; border: 1px solid #999; border-width: 1px 1px 1px 0; line-height: 14px; text-align: center; background: #ddd; }
.nudge { width: 16px; height: 16px; background: #f4f4f4; border: 1px solid; border-color: #fff #777 #777 #fff; }
.nudge svg { width: 14px; height: 14px; }
.track { flex: 1; display: flex; justify-content: flex-end; height: 16px; background: #f7f7f7; }
.thumb { width: 17%; height: 15px; background: #ececec; border: 1px solid; border-color: #ddd #777 #777 #ddd; }
.zoomer { width: 70px; height: 16px; background: #f4f4f4; }
.mini { width: 16px; height: 16px; }
.mini svg { width: 16px; height: 16px; }
.space { width: 16px; }

.rail { display: flex; flex-direction: column; gap: 1px; }
.pager { display: flex; flex-direction: column; border: 1px solid #888; }
.pager button { height: 12px; background: #f6f6f6; }
.pager button + button { border-top: 1px solid #aaa; }
.pager svg { width: 26px; height: 11px; }
.well { flex: 1; display: flex; flex-direction: column; border: 1px solid #777; background: #efefef; }
.quick { display: flex; flex-direction: column; justify-content: center; height: 22px; background: #e4e6ea; font: 700 10px/9px "Liberation Sans", "Noto Sans CJK KR", sans-serif; text-align: center; }
.draw { width: 26px; height: 22px; display: grid; place-items: center; background: linear-gradient(90deg, #fafafa, #e4e4e4); }
.draw.on { background: #f8f8f8; border: 1px solid #999; border-radius: 3px; }
.draw svg { width: 22px; height: 20px; font-family: "Liberation Sans", sans-serif; }
.tools hr { width: 24px; height: 1px; margin: 0 0 1px; border: 0; background: #999; }
</style>
